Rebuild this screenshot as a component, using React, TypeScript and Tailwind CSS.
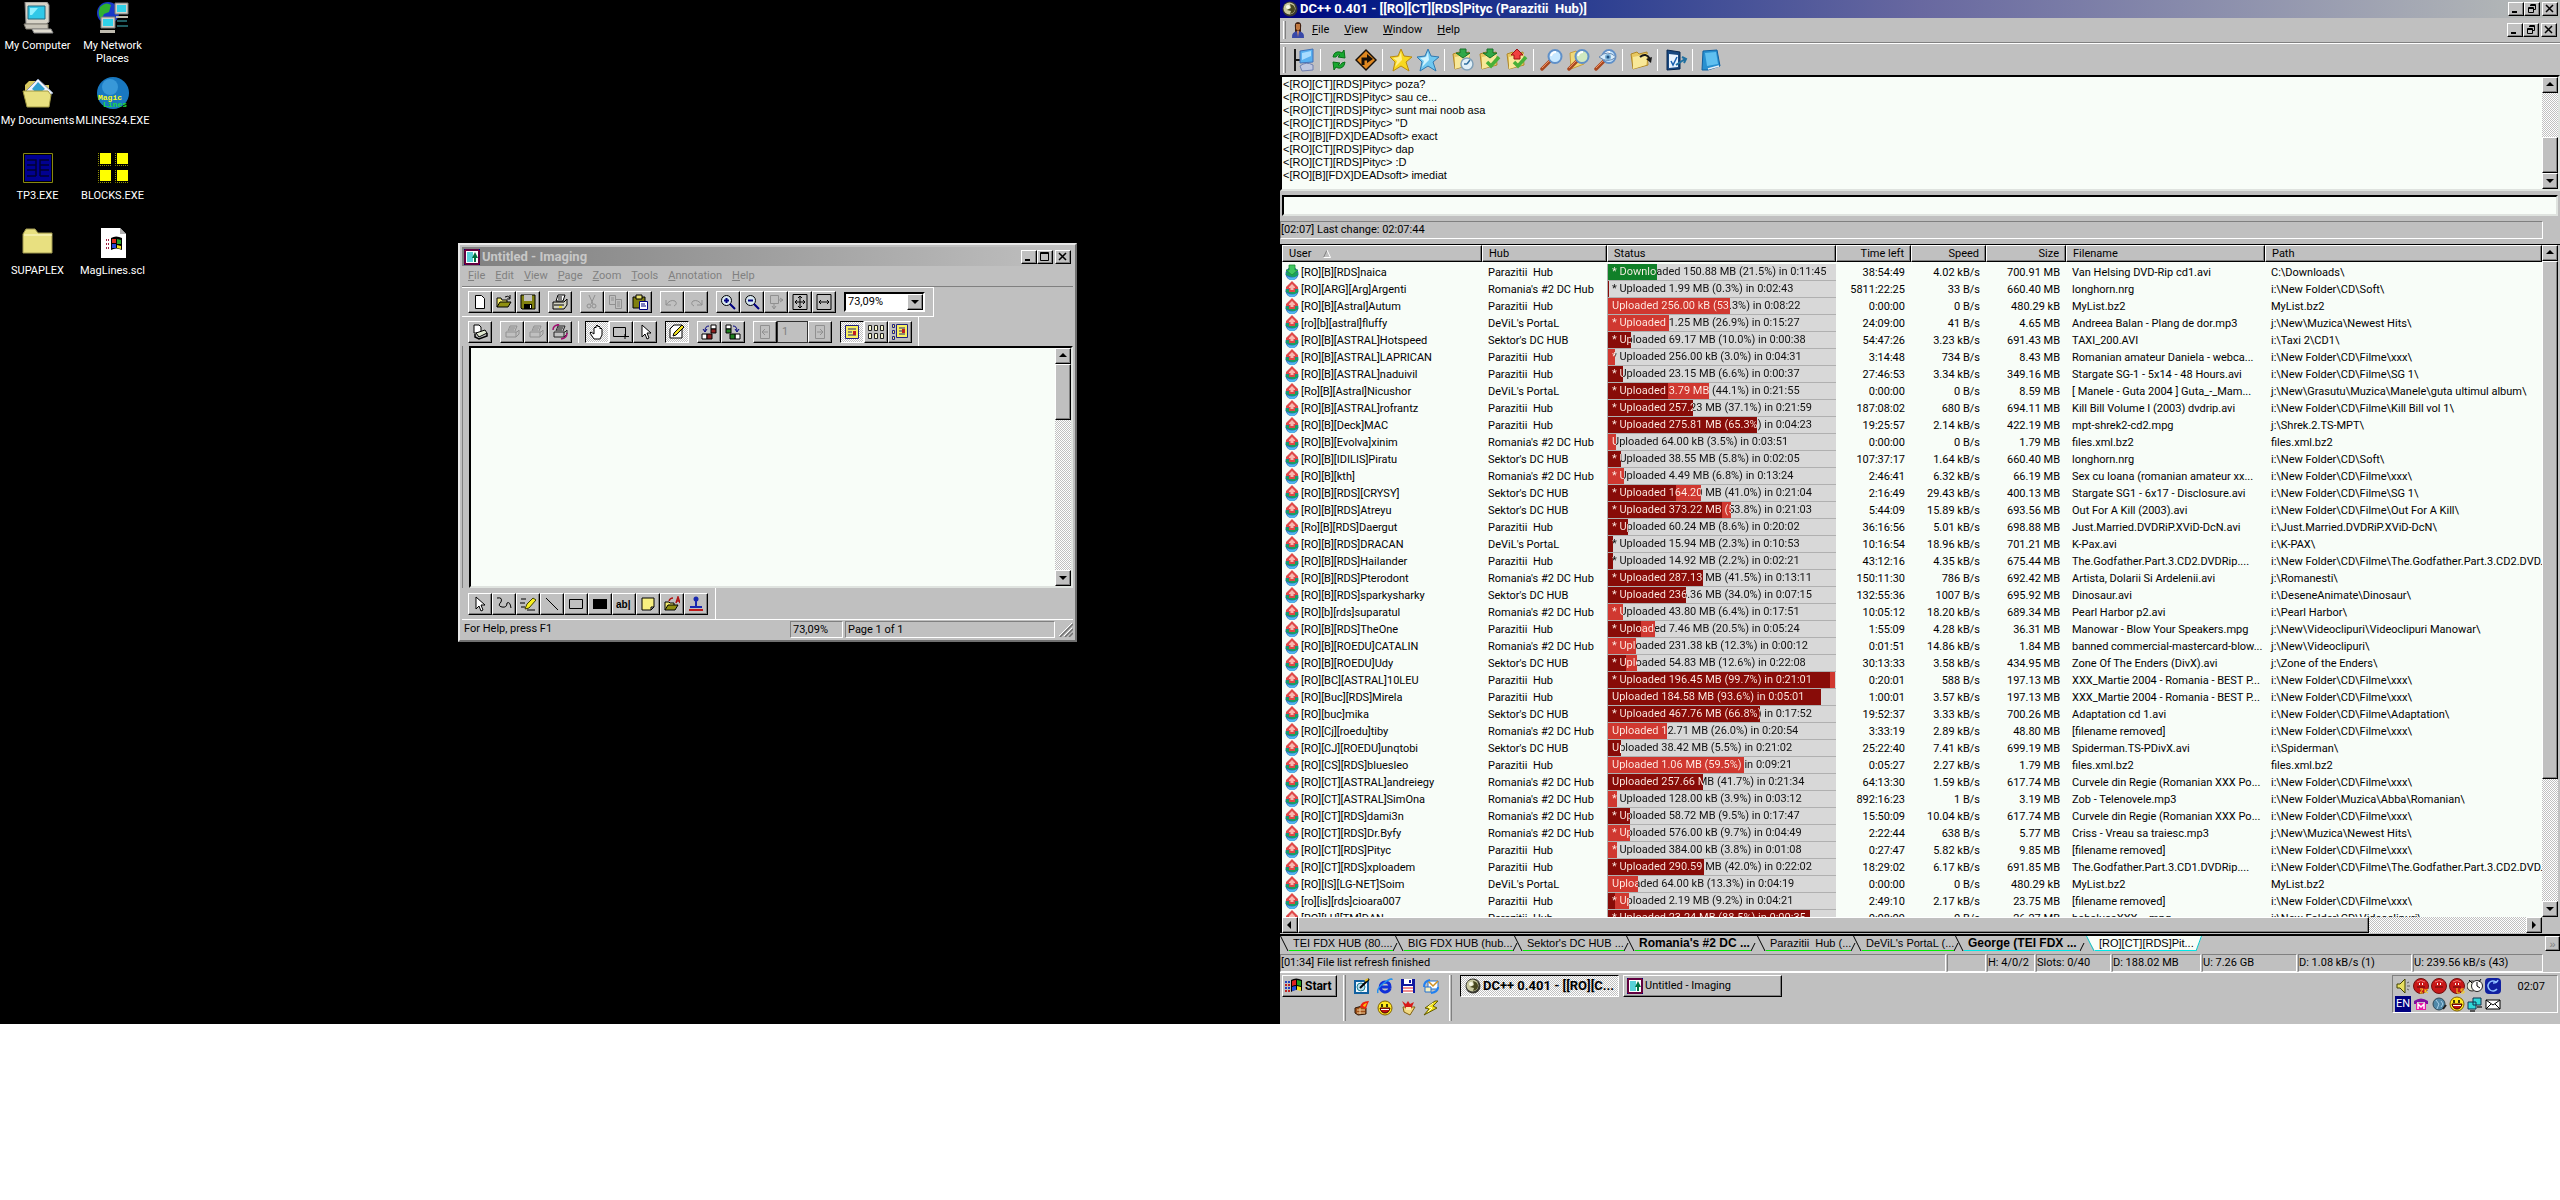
import type { ReactNode } from "react";
import clsx from "clsx";

const raised =
  "border border-t-white border-l-white border-b-black border-r-black shadow-[inset_-1px_-1px_0_#808080]";
const sunken = "border border-t-[#808080] border-l-[#808080] border-b-white border-r-white";
const well =
  "border-2 border-t-black border-l-black border-b-[#dfe3df] border-r-[#dfe3df] bg-[#f8fdf8]";
const dither =
  "bg-[repeating-conic-gradient(#c0c0c0_0_25%,#ffffff_0_50%)] bg-[length:2px_2px]";

/* ---------- icons ---------- */

function Ico({
  children,
  className = "size-4",
  box = 16,
}: {
  children: ReactNode;
  className?: string;
  box?: number;
}) {
  return (
    <svg viewBox={`0 0 ${box} ${box}`} className={clsx("shrink-0", className)} fill="none" aria-hidden="true">
      {children}
    </svg>
  );
}

function Folder() {
  return (
    <>
      <path d="M2 6l6-2 2 2 8-2 1 13-15 4z" fill="#e8c860" stroke="#b08828" />
      <path d="M4 9l15-3-2 11-13 4z" fill="#f8e898" />
    </>
  );
}

function Magnifier({ eye = false, folder = false }: { eye?: boolean; folder?: boolean }) {
  return (
    <Ico box={24} className="size-6">
      {folder && <path d="M3 5l6-2 2 2 6-1v12L4 21z" fill="#f0d878" stroke="#c8a040" />}
      <path d="M2 21l8-8" stroke="#a84820" strokeWidth="3.5" strokeLinecap="round" />
      <path d="M2 20l7-7" stroke="#f09060" strokeWidth="1" />
      <circle cx="15" cy="8.500" r="6.500" fill={folder ? "#d0e8c0" : "#c8e8ff"} stroke="#6090c8" strokeWidth="2" />
      <path d="M11 8q1-4 5-4" stroke="#fff" strokeWidth="2" />
      {eye && (
        <>
          <path d="M5 9q9-8 17 0-8 7-17 0z" fill="#d8ecfa" stroke="#6888b0" />
          <circle cx="14" cy="9" r="3" fill="#78b0d8" />
          <circle cx="14" cy="9" r="1.500" fill="#205080" />
        </>
      )}
    </Ico>
  );
}

const star = "M12 1l3 7 8 1-6 5 3 9-8-5-8 5 2-9-5-5 8-1z";

function FolderAction({ up = false, check = false }: { up?: boolean; check?: boolean }) {
  return (
    <Ico box={24} className="size-6">
      <Folder />
      {up ? (
        <path d="M12 1l6 6h-3v4H9V7H6z" fill="#f04040" stroke="#a01010" />
      ) : (
        <path d="M12 10L5 5h4V1h6v4h4z" fill="#30a848" stroke="#187028" />
      )}
      {check ? (
        <path d="M9 14l4 4 8-9" stroke="#48b038" strokeWidth="3.500" />
      ) : (
        <>
          <circle cx="16" cy="16" r="6" fill="#e0f0f8" stroke="#80a0b8" strokeWidth="1.500" />
          <path d="M16 16l3-4M16 16h-3" stroke="#3070a0" strokeWidth="1.500" />
        </>
      )}
    </Ico>
  );
}

const hubToolbar: { label: string; icon: ReactNode }[][] = [
  [
    {
      label: "Public Hubs",
      icon: (
        <Ico box={24} className="size-6">
          <path d="M3 1v22M3 12h6" stroke="#181818" strokeWidth="2" />
          <path d="M8 3l13-2v13l-13 1z" fill="#58b0f0" stroke="#4070b8" />
          <path d="M10 5l9-2v5l-9 4z" fill="#a8dcff" />
          <path d="M8 18q6-5 13-1v5l-11 1z" fill="#c0c8e0" stroke="#7080b0" />
        </Ico>
      ),
    },
  ],
  [
    {
      label: "Reconnect",
      icon: (
        <Ico box={24} className="size-6">
          <path d="M6 9q1-6 7-5l2 1 2-3 1 8-7-1 2-2q-3-1-4 2z" fill="#18a830" stroke="#087018" />
          <path d="M18 14q-1 7-7 6l-2-1-2 3-1-8 7 1-2 2q3 1 4-2z" fill="#18a830" stroke="#087018" />
        </Ico>
      ),
    },
    {
      label: "Follow redirect",
      icon: (
        <Ico box={24} className="size-6">
          <path d="M12 1l11 11-11 11L1 12z" fill="#181008" />
          <path d="M12 3l9 9-9 9-9-9z" fill="#e08820" />
          <path d="M9 17v-6h5" stroke="#181008" strokeWidth="3" />
          <path d="M13 6l6 5-6 4z" fill="#181008" />
        </Ico>
      ),
    },
  ],
  [
    {
      label: "Favorite Hubs",
      icon: (
        <Ico box={24} className="size-6">
          <path d={star} fill="#f8d820" stroke="#b88810" />
          <path d="M12 4l1 8-7 7 2-6-4-3 6-1z" fill="#fff090" />
        </Ico>
      ),
    },
    {
      label: "Favorite Users",
      icon: (
        <Ico box={24} className="size-6">
          <path d={star} fill="#70c8f0" stroke="#3078b0" />
          <path d="M12 4l1 8-7 7 2-6-4-3 6-1z" fill="#d0f4ff" />
        </Ico>
      ),
    },
  ],
  [
    { label: "Download Queue", icon: <FolderAction /> },
    { label: "Finished Downloads", icon: <FolderAction check /> },
    { label: "Finished Uploads", icon: <FolderAction up check /> },
  ],
  [
    { label: "Search", icon: <Magnifier /> },
    { label: "ADL Search", icon: <Magnifier folder /> },
    { label: "Search Spy", icon: <Magnifier eye /> },
  ],
  [
    {
      label: "Open file list",
      icon: (
        <Ico box={24} className="size-6">
          <Folder />
          <path d="M11 9q6-5 10 2" stroke="#181818" strokeWidth="2" />
          <path d="M17 11l6-2-1 6z" fill="#181818" />
        </Ico>
      ),
    },
  ],
  [
    {
      label: "Settings",
      icon: (
        <Ico box={24} className="size-6">
          <path d="M3 2l13 2v17L3 22z" fill="#184880" stroke="#082850" />
          <path d="M5 6l9 1v12l-9 1z" fill="#e8f4ff" />
          <path d="M7 13l2 4 4-8" stroke="#1860b0" strokeWidth="1.500" />
          <path d="M12 17l9-6M18 9l4 2-2 4" stroke="#2070a0" strokeWidth="2" />
        </Ico>
      ),
    },
  ],
  [
    {
      label: "Notepad",
      icon: (
        <Ico box={24} className="size-6">
          <path d="M4 3l14-1 3 16-12 4H3z" fill="#2890d0" stroke="#1060a0" />
          <path d="M6 5l11-1 2 12-11 2z" fill="#60c0f0" />
          <path d="M9 21l11-3" stroke="#e8f0f8" strokeWidth="1.500" />
        </Ico>
      ),
    },
  ],
];

function UserDrop({ down = false }: { down?: boolean }) {
  return (
    <svg viewBox="0 0 14 17" className="h-[17px] w-3.5 shrink-0" aria-hidden="true">
      <path d="M7 2q7 3 6.500 8.500Q12 16 7 16T.5 10.500Q0 5 7 2z" fill="#2868b8" />
      <path d="M1 8q6 2 12 0v3q-3 3-6 2t-6-2z" fill="#18a060" />
      <path d="M2 12q5 3 10 0-1 4-5 4t-5-4z" fill="#50b8f0" />
      {down ? (
        <path d="M7 11L1 6h3V1h6v5h3z" fill="#40c860" stroke="#189030" strokeWidth=".8" />
      ) : (
        <>
          <path d="M7 0l6 6v2h-3v3H4V8H1V6z" fill="#e04848" />
          <path d="M7 3l3 3v1H8.500v2h-3V7H4V6z" fill="#f8b8b0" />
        </>
      )}
    </svg>
  );
}

function DcLogo() {
  return (
    <Ico className="size-4">
      <circle cx="8" cy="8" r="7.500" fill="#383830" />
      <circle cx="7.500" cy="7.500" r="6" fill="#c8c8a0" />
      <path d="M8 3q5 1 5 5t-5 5l1-3-4-1 4-2z" fill="#484820" />
      <circle cx="6" cy="6" r="2" fill="#f8f8e8" />
    </Ico>
  );
}

function ImagingLogo() {
  return (
    <Ico className="size-4">
      <path d="M0 0h16v16H0z" fill="#000080" />
      <path d="M1 1h14v14H1z" stroke="#c00000" />
      <path d="M2 2h12v12H2z" fill="#fff" />
      <path d="M3 3h6v10H3z" fill="#58d0d8" />
      <path d="M11 3l3 6h-2v4h-2V9H8z" fill="#007040" />
    </Ico>
  );
}

function WinFlag() {
  return (
    <svg viewBox="0 0 18 16" className="h-4 w-[18px] shrink-0" aria-hidden="true">
      <path d="M6 2q5-3 11 0v11q-6-3-11 1z" fill="#000" />
      <path d="M7 3q2-1 4-1v5q-2 0-4 1z" fill="#e02020" />
      <path d="M12 2l4 1v5l-4-1z" fill="#20a020" />
      <path d="M7 9q2-1 4-1v4l-4 1z" fill="#2050e0" />
      <path d="M12 8l4 1v4l-4-1z" fill="#f0e020" />
      <path d="M0 4h2M3 4h2M0 10h2M3 10h2" stroke="#2040c0" strokeWidth="2" />
      <path d="M0 7h2M3 7h2M0 13h2M3 13h2" stroke="#c02020" strokeWidth="2" />
    </svg>
  );
}

const smiley = (
  <Ico>
    <circle cx="8" cy="8" r="7" fill="#ffe820" stroke="#806000" />
    <path d="M3 8h10q-1 5-5 5T3 8z" fill="#c01010" stroke="#400000" />
    <path d="M4 9h8v1H4z" fill="#fff" />
    <path d="M5 4v3M10 4v3" stroke="#000" strokeWidth="1.500" />
  </Ico>
);

const redFace = (
  <>
    <circle cx="8" cy="8" r="7.500" fill="#c81818" stroke="#701010" />
    <path d="M4 4q4-3 8 0" stroke="#f07070" />
    <path d="M6 5h1v2H6zM9 5h1v2H9z" fill="#fff" />
    <path d="M4 9h8" stroke="#600808" />
  </>
);

const quickLaunch: { label: string; icon: ReactNode }[] = [
  {
    label: "Show Desktop",
    icon: (
      <Ico>
        <path d="M1 3h13v12H1z" fill="#f0f8ff" stroke="#1060a0" strokeWidth="2" />
        <circle cx="7" cy="9" r="4" fill="#b8e0f0" stroke="#208090" />
        <path d="M6 10l9-9" stroke="#000" strokeWidth="2" />
        <path d="M11 3l3-2" stroke="#e8c020" strokeWidth="2" />
      </Ico>
    ),
  },
  {
    label: "Internet Explorer",
    icon: (
      <Ico>
        <path d="M13 10.500A5 5 0 118 4q5 0 5 5H4" stroke="#1030d8" strokeWidth="3" />
        <path d="M1 15Q-1 11 7 5t8-3" stroke="#2090f0" strokeWidth="1.500" />
      </Ico>
    ),
  },
  {
    label: "Save",
    icon: (
      <Ico>
        <path d="M1 1h14v14H1z" fill="#1018a0" />
        <path d="M4 1h8v5H4z" fill="#fff" />
        <path d="M9 2h2v3H9z" fill="#1018a0" />
        <path d="M3 8h10v7H3z" fill="#fff" />
        <path d="M3 10h10M3 13h10" stroke="#e02020" />
      </Ico>
    ),
  },
  {
    label: "Outlook Express",
    icon: (
      <Ico>
        <path d="M5 3h10v8H5z" fill="#fff" stroke="#2070d0" />
        <path d="M5 3l5 5 5-5" stroke="#d09020" strokeWidth="1.500" />
        <path d="M1 9q0-6 6-7M15 9q0 5-7 6" stroke="#2080f0" strokeWidth="2" />
        <path d="M2 9h6v5H2z" fill="#f8f0c0" stroke="#2070d0" />
      </Ico>
    ),
  },
  {
    label: "Firewall",
    icon: (
      <Ico>
        <path d="M1 8l7-2 4 2v6l-8 1-3-2z" fill="#a05018" stroke="#301808" />
        <path d="M3 10h8M3 13h8M6 8v6" stroke="#f0d0a0" />
        <path d="M6 7q1-6 9-6-2 4-3 8z" fill="#f02010" />
        <path d="M9 6q0-2 4-3l-2 4z" fill="#f8c010" />
      </Ico>
    ),
  },
  { label: "Messenger", icon: smiley },
  {
    label: "Mail",
    icon: (
      <Ico>
        <path d="M3 7h12l-5 8-6-3z" fill="#f0d880" stroke="#806010" />
        <path d="M2 1l4 3 2-3 2 3 4-2-3 7H6z" fill="#d81818" />
        <path d="M6 7h5v3H6z" fill="#f8e8b0" />
      </Ico>
    ),
  },
  {
    label: "Winamp",
    icon: (
      <Ico>
        <path d="M12 1L2 8l4 1-5 6 13-7-4-2 5-5z" fill="#f0e018" stroke="#605800" />
        <path d="M10 3L5 7l4 1-4 4" stroke="#fffcc0" />
      </Ico>
    ),
  },
];

const trayIcons: { label: string; icon: ReactNode }[] = [
  {
    label: "Volume",
    icon: (
      <Ico>
        <path d="M2 6h3l5-5v14l-5-5H2z" fill="#e8e060" stroke="#404000" />
        <path d="M12 5l2-1M12 8h3M12 11l2 1" stroke="#606060" />
      </Ico>
    ),
  },
  {
    label: "Server 2K",
    icon: (
      <Ico>
        {redFace}
        <path d="M7 11h3l-3 4h3M12 11v4M15 11l-3 2 3 2" stroke="#f8d020" />
      </Ico>
    ),
  },
  { label: "Server", icon: <Ico>{redFace}</Ico> },
  {
    label: "Server LS",
    icon: (
      <Ico>
        {redFace}
        <path d="M8 10v5h3M15 11h-3v2h3v2h-3" stroke="#f8d020" />
      </Ico>
    ),
  },
  {
    label: "Scheduler",
    icon: (
      <Ico>
        <circle cx="5" cy="8" r="5" fill="#f0f0e0" stroke="#202020" />
        <circle cx="10" cy="8" r="5.500" fill="#fff" stroke="#202020" />
        <path d="M10 4v4l3 2M2 2l3 3M14 1l-2 3" stroke="#000" />
      </Ico>
    ),
  },
  {
    label: "Internet",
    icon: (
      <Ico>
        <rect width="16" height="16" rx="4" fill="#1020a0" />
        <path d="M11 4a5 5 0 101 7M8 5q4 0 5-3" stroke="#90c0ff" strokeWidth="1.500" />
      </Ico>
    ),
  },
  {
    label: "Dialer",
    icon: (
      <Ico>
        <path d="M1 5q7-5 14 0v3h-3V6H4v2H1z" fill="#8010a0" />
        <path d="M3 7h10v7H3z" fill="#e818a8" />
        <path d="M5 13V8l3 3 3-3v5" stroke="#fff" strokeWidth="1.500" />
      </Ico>
    ),
  },
  {
    label: "Sound manager",
    icon: (
      <Ico>
        <circle cx="8" cy="8" r="6" fill="#5088a8" stroke="#304858" />
        <path d="M5 4l3 4-2 5M10 5l2 3-2 3" stroke="#a8d0e8" />
        <path d="M12 13l3-4" stroke="#202020" strokeWidth="2" />
      </Ico>
    ),
  },
  { label: "Messenger status", icon: smiley },
  {
    label: "Network",
    icon: (
      <Ico>
        <path d="M6 2h8v7H6zM1 6h8v7H1z" fill="#30d8d8" stroke="#103050" />
        <path d="M3 15h5M10 11h5" stroke="#303030" strokeWidth="1.500" />
      </Ico>
    ),
  },
  {
    label: "New mail",
    icon: (
      <Ico>
        <path d="M1 4h14v9H1z" fill="#fff" stroke="#000" />
        <path d="M1 4l7 5 7-5M1 13l5-5M15 13l-5-5" stroke="#000" />
      </Ico>
    ),
  },
];

/* ---------- window chrome ---------- */

function Caption({ max = false }: { max?: boolean }) {
  const btn = clsx("flex h-3.5 w-4 items-center justify-center bg-[#c0c0c0]", raised);
  return (
    <div className="flex shrink-0">
      <button className={btn} aria-label="Minimize">
        <Ico box={10} className="size-2.5">
          <path d="M1 8h5" stroke="#000" strokeWidth="2" />
        </Ico>
      </button>
      <button className={btn} aria-label={max ? "Maximize" : "Restore"}>
        <Ico box={10} className="size-2.5">
          {max ? (
            <path d="M.5.5h8v8h-8zM0 1.500h9" stroke="#000" />
          ) : (
            <path d="M3.500.5h5v5h-2M3 1.500h6M1.500 3.500h5v5h-5zM1 4.500h6" stroke="#000" />
          )}
        </Ico>
      </button>
      <button className={clsx(btn, "ml-0.5")} aria-label="Close">
        <Ico box={10} className="size-2.5">
          <path d="M1 1l7 7M8 1L1 8" stroke="#000" strokeWidth="1.500" />
        </Ico>
      </button>
    </div>
  );
}

const arrows = {
  up: "M4 1l4 4H0z",
  down: "M0 2h8L4 6z",
  left: "M1 4l4-4v8z",
  right: "M6 4L2 0v8z",
};

function Arrow({ dir, className }: { dir: keyof typeof arrows; className?: string }) {
  return (
    <button
      aria-label={`Scroll ${dir}`}
      className={clsx("flex size-4 shrink-0 items-center justify-center bg-[#c0c0c0]", raised, className)}
    >
      <Ico box={8} className="size-2">
        <path d={arrows[dir]} fill="#000" />
      </Ico>
    </button>
  );
}

function VScroll({ before, thumb }: { before: string; thumb: string }) {
  return (
    <div className={clsx("flex w-4 shrink-0 flex-col", dither)}>
      <Arrow dir="up" />
      <div className={before} />
      <div className={clsx("bg-[#c0c0c0]", raised, thumb)} />
      <Arrow dir="down" className="mt-auto" />
    </div>
  );
}

function Menu({ items, className }: { items: string[]; className: string }) {
  return (
    <nav className={clsx("flex", className)}>
      {items.map((item) => (
        <button key={item}>
          <span className="underline">{item[0]}</span>
          {item.slice(1)}
        </button>
      ))}
    </nav>
  );
}

/* ---------- desktop ---------- */

const desktopIcons: { label: string; icon: ReactNode }[] = [
  {
    label: "My Computer",
    icon: (
      <Ico box={32} className="size-8">
        <path d="M3 0h22l2 3v17l-3 2H4z" fill="#d8d4c8" stroke="#888" />
        <path d="M6 4h17v13H6z" fill="#30c8e8" stroke="#206880" />
        <path d="M8 6h8l-6 7H8z" fill="#90f0ff" />
        <path d="M2 22h24v5H4z" fill="#c8c4b8" stroke="#807c70" />
        <path d="M10 27h19l2 4H12z" fill="#e0dcd0" stroke="#888" />
      </Ico>
    ),
  },
  {
    label: "My Network Places",
    icon: (
      <Ico box={32} className="size-8">
        <circle cx="11" cy="11" r="11" fill="#1838c8" />
        <path d="M3 5q6-6 11-2l-2 7-5 2-3 6q-4-6-1-13z" fill="#30b030" />
        <path d="M18 1h13v11H18z" fill="#d0d0c8" stroke="#777" />
        <path d="M20 3h9v7h-9z" fill="#30d0e8" />
        <path d="M4 15h14v11H4z" fill="#d0d0c8" stroke="#777" />
        <path d="M6 17h10v7H6z" fill="#30d0e8" />
        <path d="M3 28h15v3H3zM19 14h12v2H19z" fill="#c0bcb0" />
        <path d="M20 19h10M20 24h11" stroke="#40b8c0" />
      </Ico>
    ),
  },
  {
    label: "My Documents",
    icon: (
      <Ico box={32} className="size-8">
        <path d="M3 8l4-4h7l2 4h11v9H3z" fill="#d8c860" />
        <path d="M16 2l15 14-6 4H6l-4-4z" fill="#f0f4ff" stroke="#8898b0" />
        <path d="M16 5l7 7-7 5-6-5z" fill="#30a0d0" />
        <path d="M1 14h25l3 4-2 12H5z" fill="#e8e080" stroke="#a09840" />
      </Ico>
    ),
  },
  {
    label: "MLINES24.EXE",
    icon: (
      <Ico box={32} className="size-8">
        <circle cx="16" cy="16" r="16" fill="#1878c0" />
        <circle cx="13" cy="10" r="8" fill="#3898d8" />
        <text x="1" y="23" fontSize="8" fontFamily="Liberation Mono" fontWeight="700" fill="#f8f820">
          Magic
        </text>
        <text x="6" y="30" fontSize="8" fontFamily="Liberation Mono" fontWeight="700" fill="#20d840">
          Lines
        </text>
      </Ico>
    ),
  },
  {
    label: "TP3.EXE",
    icon: (
      <Ico box={32} className="size-8">
        <path d="M1.500 1.500h29v29h-29z" stroke="#888810" />
        <path d="M3 3h26v26H3z" fill="#000090" />
        <path d="M5 8h9v16M5 13h9M5 18h9M5 24h9M27 8h-9v16M27 13h-9M27 18h-9M27 24h-9" stroke="#000030" strokeWidth="1.500" />
      </Ico>
    ),
  },
  {
    label: "BLOCKS.EXE",
    icon: (
      <Ico box={32} className="size-8">
        <path d="M3 1h11v11H3zM20 1h11v11H20zM3 18h11v11H3zM20 18h11v11H20z" fill="#ffff00" />
        <path d="M1.500 1v12.500H14M18.500 1v12.500H31M1.500 18v12.500H14M18.500 18v12.500H31" stroke="#909000" strokeDasharray="1 1" />
      </Ico>
    ),
  },
  {
    label: "SUPAPLEX",
    icon: (
      <Ico box={32} className="size-8">
        <path d="M1 7l3-5h9l3 4h14v20H1z" fill="#e8e080" stroke="#a09850" />
        <path d="M2 8h28" stroke="#fffcd0" />
      </Ico>
    ),
  },
  {
    label: "MagLines.scl",
    icon: (
      <Ico box={32} className="size-8">
        <path d="M4 1h19l6 6v24H4z" fill="#fff" />
        <path d="M23 1v6h6z" fill="#b0b0b0" />
        <path d="M14 11q5-3 11 0v12q-6-3-11 0z" fill="#000" />
        <path d="M15 12h4v4h-4z" fill="#e03020" />
        <path d="M20 12l4 1v4h-4z" fill="#28a028" />
        <path d="M15 17h4v4h-4z" fill="#2848d8" />
        <path d="M20 18l4 1v3l-4-1z" fill="#f0e020" />
        <path d="M9 13h4M9 17h4M9 21h4" stroke="#a02040" strokeWidth="2" strokeDasharray="1 1" />
      </Ico>
    ),
  },
];

/* ---------- Imaging window ---------- */

type Tool = { label: string; icon: ReactNode; down?: boolean };

const gray = "#909090";
const page = "M3.500 1.500h6l3 3v10h-9z";
const pageStack = (color: string) => (
  <>
    <path d="M4 7l2-5h7l-2 5M2 8h11l2-2M2 8v5h10V8M12 13l3-3V6" stroke={color} />
    <path d="M6 4h5M5 6h5" stroke={color} />
  </>
);

const fileTools: Tool[][] = [
  [
    { label: "New", icon: <path d={page} fill="#fff" stroke="#000" /> },
    {
      label: "Open",
      icon: (
        <>
          <path d="M1 13V4h4l1 2h5v2" fill="#f0e870" stroke="#000" />
          <path d="M1 13l3-5h11l-3 5z" fill="#909010" stroke="#000" />
          <path d="M9 3q3-2 5 1M14 1v4h-3" stroke="#000" />
        </>
      ),
    },
    {
      label: "Save",
      icon: (
        <>
          <path d="M1 1h14v14H2l-1-1z" fill="#808010" stroke="#000" />
          <path d="M4 1h8v6H4z" fill="#c0c0c0" />
          <path d="M4 10h8v5H4z" fill="#000" />
          <path d="M10 11h1v3h-1z" fill="#fff" />
        </>
      ),
    },
  ],
  [
    {
      label: "Print",
      icon: (
        <>
          <path d="M4 7l2-6h7l-2 6z" fill="#fff" stroke="#000" />
          <path d="M1 8h11l3-3v6l-3 4H1z" fill="#d0d0c0" stroke="#000" />
          <path d="M2 11h10M6 3h4M6 5h4" stroke="#000" />
          <path d="M7 13h3" stroke="#f0e000" strokeWidth="1.500" />
        </>
      ),
    },
  ],
  [
    {
      label: "Cut",
      icon: (
        <>
          <path d="M5 1l4 9M11 1L7 10" stroke={gray} />
          <circle cx="5" cy="12" r="2" stroke={gray} />
          <circle cx="10" cy="12" r="2" stroke={gray} />
        </>
      ),
    },
    {
      label: "Copy",
      icon: <path d="M1.500 1.500h6v9h-6zM3 4h3M3 6h3M7.500 5.500h6v9h-6zM9 8h3M9 10h3M9 12h3" stroke={gray} />,
    },
    {
      label: "Paste",
      icon: (
        <>
          <path d="M1 3h12v11H1z" fill="#808010" stroke="#000" />
          <path d="M4 1h6v4H4z" fill="#e8e070" stroke="#000" />
          <path d="M7.500 7.500h8v8h-8z" fill="#fff" stroke="#000080" />
          <path d="M9 10h4M9 12h5" stroke="#000080" />
        </>
      ),
    },
  ],
  [
    { label: "Undo", icon: <path d="M2 6v5h5M2 11q4-6 9-4 3 3-1 5" stroke={gray} /> },
    { label: "Redo", icon: <path d="M14 6v5H9M14 11q-4-6-9-4-3 3 1 5" stroke={gray} /> },
  ],
  [
    {
      label: "Zoom in",
      icon: (
        <>
          <circle cx="6.500" cy="6.500" r="5" fill="#d8e8f0" stroke="#000" />
          <path d="M4 6.500h5M6.500 4v5M10 10l5 5" stroke="#000080" strokeWidth="2" />
        </>
      ),
    },
    {
      label: "Zoom out",
      icon: (
        <>
          <circle cx="6.500" cy="6.500" r="5" fill="#d8e8f0" stroke="#000" />
          <path d="M4 6.500h5M10 10l5 5" stroke="#000080" strokeWidth="2" />
        </>
      ),
    },
    { label: "Zoom to selection", icon: <path d="M2.500 1.500h8v8h-8zM6 9v5M4 12l2 3 2-3M10 6h5M12 4l3 2-3 2" stroke={gray} /> },
    {
      label: "Best fit",
      icon: <path d="M1 .5h14v15H1zM8 2v12M3 8h10M6 4l2-2 2 2M6 12l2 2 2-2M5 6L3 8l2 2M11 6l2 2-2 2" stroke="#000" />,
    },
    { label: "Fit to width", icon: <path d="M1 .5h14v15H1zM3 8h10M5 6L3 8l2 2M11 6l2 2-2 2" stroke="#000" /> },
  ],
];

const scanTools: Tool[][] = [
  [
    {
      label: "Scan new",
      icon: (
        <>
          <path d="M2 1h5l2 2v6H2z" fill="#fff" stroke="#000" />
          <path d="M4 9l9-3 2 3-8 4z" fill="#e0e8d0" stroke="#000" />
          <path d="M3 10v3l4 2 8-3V9" stroke="#000" strokeWidth="1.500" />
        </>
      ),
    },
  ],
  [
    { label: "Insert scan", icon: pageStack(gray) },
    { label: "Append scan", icon: pageStack(gray) },
    {
      label: "Rescan",
      icon: (
        <>
          {pageStack("#202020")}
          <path d="M1 6q0-5 6-5l-2-1M15 9q0 5-6 6" stroke="#a01070" strokeWidth="1.500" />
        </>
      ),
    },
  ],
];

const viewTools: Tool[][] = [
  [
    {
      label: "Drag",
      down: true,
      icon: (
        <path
          d="M5 15l-4-6 1-1 3 2V4l1-1 1 1V2l1-1 1 1v1l1-1 1 1v2l1-1 1 1v6l-2 4z"
          fill="#fff"
          stroke="#000"
        />
      ),
    },
    { label: "Select image", icon: <path d="M.5 3.500h12v9H.5zM12 10v5M10 12.500h6" stroke="#000" /> },
    { label: "Select annotation", icon: <path d="M5 1v12l3-3 2 5 2-1-2-5h4z" fill="#fff" stroke="#000" /> },
  ],
  [
    {
      label: "Annotation toolbox",
      down: true,
      icon: (
        <>
          <path d="M1 5l4-4h8v13H1z" fill="#fff" stroke="#000" />
          <path d="M4 12l1-3 8-8 2 2-8 8z" fill="#f0e020" stroke="#000" />
        </>
      ),
    },
  ],
  [
    {
      label: "Rotate left",
      icon: (
        <>
          <path d="M10 1h5v4h-5zM1 10h5v5H1z" fill="#fff" stroke="#000" />
          <path d="M10 5h5v4h-5zM6 10h5v5H6z" fill="#902020" stroke="#000" />
          <path d="M8 2Q4 2 4 7M2 5l2 3 2-3" stroke="#000080" />
        </>
      ),
    },
    {
      label: "Rotate right",
      icon: (
        <>
          <path d="M1 1h5v4H1zM10 10h5v5h-5z" fill="#fff" stroke="#000" />
          <path d="M1 5h5v4H1zM5 10h5v5H5z" fill="#208020" stroke="#000" />
          <path d="M8 2q4 0 4 5M10 5l2 3 2-3" stroke="#000080" />
        </>
      ),
    },
  ],
];

const layoutTools: Tool[] = [
  {
    label: "One page view",
    down: true,
    icon: (
      <>
        <path d="M1.500 1.500h13v13h-13z" fill="#f8f060" stroke="#202080" />
        <path d="M4 5h8M4 8h4M4 11h8" stroke="#202080" />
        <path d="M9 7h3v4H9z" fill="#c02020" />
      </>
    ),
  },
  {
    label: "Thumbnail view",
    icon: <path d="M.5 1.500h3v5h-3zM6.500 1.500h3v5h-3zM12.500 1.500h3v5h-3zM.5 9.500h3v5h-3zM6.500 9.500h3v5h-3zM12.500 9.500h3v5h-3z" fill="#f8f8d0" stroke="#202020" />,
  },
  {
    label: "Page and thumbnails view",
    icon: (
      <>
        <path d="M.5.5h2v3h-2zM.5 6.500h2v3h-2zM.5 12.500h2v3h-2zM4.500.5h11v13h-11z" fill="#f8f060" stroke="#202080" />
        <path d="M7 4h6M7 7h3M7 10h6" stroke="#202080" />
        <path d="M10 5h3v4h-3z" fill="#c02020" />
      </>
    ),
  },
];

const annotationTools: Tool[] = [
  { label: "Annotation selection", icon: <path d="M4 1v12l3-3 2 5 2-1-2-5h4z" fill="#fff" stroke="#000" /> },
  { label: "Freehand line", icon: <path d="M1 2q6-1 4 4-4 4 1 5t5-4q3-2 4 5" stroke="#000" /> },
  {
    label: "Highlighter",
    icon: (
      <>
        <path d="M1 3h5M0 7h5M1 11h4M7 14h8" stroke="#000" />
        <path d="M5 13l2-5 6-6 3 2-7 8z" fill="#f8f020" stroke="#404000" />
      </>
    ),
  },
  { label: "Straight line", icon: <path d="M2 2l12 12" stroke="#000" /> },
  { label: "Hollow rectangle", icon: <path d="M1.500 3.500h13v9h-13z" stroke="#000" /> },
  { label: "Filled rectangle", icon: <path d="M1 3h14v10H1z" fill="#000" /> },
  {
    label: "Typed text",
    icon: (
      <text x="0" y="12" fontSize="10" fontFamily="Liberation Sans" fontWeight="700" fill="#000">
        ab|
      </text>
    ),
  },
  { label: "Attach a note", icon: <path d="M2 2h12v9l-3 3H2zM14 11h-3v3" fill="#f8f080" stroke="#000" /> },
  {
    label: "Text from file",
    icon: (
      <>
        <path d="M1 14V6h4l1 1h4v2" fill="#f0e870" stroke="#000" />
        <path d="M1 14l3-5h10l-3 5z" fill="#909010" stroke="#000" />
        <path d="M12 7l2-6 2 6M13 5h2M5 5q1-3 4-3" stroke="#b01010" strokeWidth="1.500" />
      </>
    ),
  },
  {
    label: "Rubber stamp",
    icon: (
      <>
        <circle cx="8" cy="3" r="2.500" fill="#1828b0" />
        <path d="M7 4h2v6H7z" fill="#1828b0" />
        <path d="M2 10h12v2H2z" fill="#1828b0" />
        <path d="M1 13h14v2H1z" fill="#c01818" />
      </>
    ),
  },
];

function ToolButton({ label, icon, down }: Tool) {
  return (
    <button
      aria-label={label}
      className={clsx(
        "flex h-[22px] w-6 items-center justify-center",
        down
          ? clsx("border border-t-black border-l-black border-r-white border-b-white", dither)
          : clsx("bg-[#c0c0c0]", raised),
      )}
    >
      <Ico>{icon}</Ico>
    </button>
  );
}

function ToolGroup({ tools }: { tools: Tool[] }) {
  return (
    <div className="flex">
      {tools.map((t) => (
        <ToolButton key={t.label} {...t} />
      ))}
    </div>
  );
}

function ImagingWindow() {
  return (
    <section
      className={clsx(
        "absolute top-[243px] left-[458px] flex h-[399px] w-[619px] flex-col border-2 bg-[#c0c0c0] p-0.5",
        "border-t-[#e8e8e8] border-l-[#e8e8e8] border-r-[#707070] border-b-[#707070]",
      )}
    >
      <header className="flex h-[19px] shrink-0 items-center gap-0.5 bg-linear-to-r from-[#808080] to-[#c0c0c0] px-0.5">
        <ImagingLogo />
        <h2 className="grow text-[13px] leading-4 font-bold text-[#c8c8c8]">Untitled - Imaging</h2>
        <Caption max />
      </header>
      <Menu
        items={["File", "Edit", "View", "Page", "Zoom", "Tools", "Annotation", "Help"]}
        className="h-[21px] shrink-0 items-center gap-2.5 border-b border-b-[#808080] px-1.5 text-[#808080]"
      />
      <div className="flex h-[30px] w-[472px] shrink-0 items-center gap-2 border-t border-r border-b border-white pl-1.5">
        {fileTools.map((tools) => (
          <ToolGroup key={tools[0].label} tools={tools} />
        ))}
        <div className={clsx("flex h-5 w-[81px] bg-white", "border-2 border-t-black border-l-black border-r-white border-b-white")}>
          <input aria-label="Zoom" defaultValue="73,09%" className="w-0 grow bg-transparent pl-0.5 outline-none" />
          <Arrow dir="down" />
        </div>
      </div>
      <div className="flex h-[29px] w-[457px] shrink-0 items-center border-r border-white pl-1.5">
        <div className="flex gap-2 border-r border-white pr-1.5">
          {scanTools.map((tools) => (
            <ToolGroup key={tools[0].label} tools={tools} />
          ))}
        </div>
        <div className="flex gap-2 pl-1.5">
          {viewTools.map((tools) => (
            <ToolGroup key={tools[0].label} tools={tools} />
          ))}
          <div className="flex">
            <ToolButton
              label="Previous page"
              icon={<path d="M3.500 1.500h9v13h-9zM11 8H6M8 5L5 8l3 3" stroke={gray} />}
            />
            <input
              aria-label="Page number"
              defaultValue="1"
              className={clsx("h-[22px] w-[31px] bg-[#c0c0c0] px-1 text-[#808080] outline-none", "border border-[#303030]")}
            />
            <ToolButton
              label="Next page"
              icon={<path d="M3.500 1.500h9v13h-9zM5 8h5M8 5l3 3-3 3" stroke={gray} />}
            />
          </div>
          <ToolGroup tools={layoutTools} />
        </div>
      </div>
      <div className="flex min-h-0 grow border-l border-[#808080] pl-1.5">
        <div className={clsx("flex grow", well)}>
          <div className="grow" />
          <VScroll before="" thumb="h-14" />
        </div>
      </div>
      <div className="flex h-[31px] w-[254px] shrink-0 items-center border-r border-white pl-1.5">
        <ToolGroup tools={annotationTools} />
      </div>
      <footer className="flex h-[19px] shrink-0 gap-0.5 border-t border-white pt-px leading-4">
        <div className="w-[326px] pl-0.5">For Help, press F1</div>
        <div className={clsx("w-[53px] pl-0.5", sunken)}>73,09%</div>
        <div className={clsx("grow pl-0.5", sunken)}>Page 1 of 1</div>
        <Ico className="size-4">
          <path d="M3 16L16 3M8 16l8-8M12 16l4-4" stroke="#707070" strokeWidth="1.500" />
          <path d="M2 15L15 2M7 15l8-8" stroke="#fff" />
        </Ico>
      </footer>
    </section>
  );
}

/* ---------- DC++ ---------- */

const chat: [string, string][] = [
  ["[RO][CT][RDS]Pityc", "poza?"],
  ["[RO][CT][RDS]Pityc", "sau ce..."],
  ["[RO][CT][RDS]Pityc", "sunt mai noob asa"],
  ["[RO][CT][RDS]Pityc", "''D"],
  ["[RO][B][FDX]DEADsoft", "exact"],
  ["[RO][CT][RDS]Pityc", "dap"],
  ["[RO][CT][RDS]Pityc", ":D"],
  ["[RO][B][FDX]DEADsoft", "imediat"],
];

const P = "Parazitii  Hub";
const R = "Romania's #2 DC Hub";
const D = "DeViL's PortaL";
const S = "Sektor's DC HUB";
const XXX = "i:\\New Folder\\CD\\Filme\\xxx\\";
const GODFATHER = "i:\\New Folder\\CD\\Filme\\The.Godfather.Part.3.CD2.DVD.";

// user, hub, status, percent done, percent drawn dark, time left, speed, size, filename, path
type Transfer = [string, string, string, number, number, string, string, string, string, string];

const transfers: Transfer[] = [
  ["[RO][B][RDS]naica", P, "* Downloaded 150.88 MB (21.5%) in 0:11:45", 21.5, 0, "38:54:49", "4.02 kB/s", "700.91 MB", "Van Helsing DVD-Rip cd1.avi", "C:\\Downloads\\"],
  ["[RO][ARG][Arg]Argenti", R, "* Uploaded 1.99 MB (0.3%) in 0:02:43", 0.3, 0.3, "5811:22:25", "33 B/s", "660.40 MB", "longhorn.nrg", "i:\\New Folder\\CD\\Soft\\"],
  ["[RO][B][Astral]Autum", P, "Uploaded 256.00 kB (53.3%) in 0:08:22", 53.3, 0, "0:00:00", "0 B/s", "480.29 kB", "MyList.bz2", "MyList.bz2"],
  ["[ro][b][astral]fluffy", D, "* Uploaded 1.25 MB (26.9%) in 0:15:27", 26.9, 0, "24:09:00", "41 B/s", "4.65 MB", "Andreea Balan - Plang de dor.mp3", "j:\\New\\Muzica\\Newest Hits\\"],
  ["[RO][B][ASTRAL]Hotspeed", S, "* Uploaded 69.17 MB (10.0%) in 0:00:38", 10, 10, "54:47:26", "3.23 kB/s", "691.43 MB", "TAXI_200.AVI", "i:\\Taxi 2\\CD1\\"],
  ["[RO][B][ASTRAL]LAPRICAN", P, "* Uploaded 256.00 kB (3.0%) in 0:04:31", 3, 0, "3:14:48", "734 B/s", "8.43 MB", "Romanian amateur Daniela - webca...", XXX],
  ["[RO][B][ASTRAL]naduivil", P, "* Uploaded 23.15 MB (6.6%) in 0:00:37", 6.6, 6.6, "27:46:53", "3.34 kB/s", "349.16 MB", "Stargate SG-1 - 5x14 - 48 Hours.avi", "i:\\New Folder\\CD\\Filme\\SG 1\\"],
  ["[Ro][B][Astral]Nicushor", D, "* Uploaded 3.79 MB (44.1%) in 0:21:55", 44.1, 26.5, "0:00:00", "0 B/s", "8.59 MB", "[ Manele - Guta 2004 ] Guta_-_Mam...", "j:\\New\\Grasutu\\Muzica\\Manele\\guta ultimul album\\"],
  ["[RO][B][ASTRAL]rofrantz", P, "* Uploaded 257.23 MB (37.1%) in 0:21:59", 37.1, 37.1, "187:08:02", "680 B/s", "694.11 MB", "Kill Bill Volume I (2003) dvdrip.avi", "i:\\New Folder\\CD\\Filme\\Kill Bill vol 1\\"],
  ["[RO][B][Deck]MAC", P, "* Uploaded 275.81 MB (65.3%) in 0:04:23", 65.3, 65.3, "19:25:57", "2.14 kB/s", "422.19 MB", "mpt-shrek2-cd2.mpg", "j:\\Shrek.2.TS-MPT\\"],
  ["[RO][B][Evolva]xinim", R, "Uploaded 64.00 kB (3.5%) in 0:03:51", 3.5, 0, "0:00:00", "0 B/s", "1.79 MB", "files.xml.bz2", "files.xml.bz2"],
  ["[RO][B][IDILIS]Piratu", S, "* Uploaded 38.55 MB (5.8%) in 0:02:05", 5.8, 5.8, "107:37:17", "1.64 kB/s", "660.40 MB", "longhorn.nrg", "i:\\New Folder\\CD\\Soft\\"],
  ["[RO][B][kth]", R, "* Uploaded 4.49 MB (6.8%) in 0:13:24", 6.8, 0, "2:46:41", "6.32 kB/s", "66.19 MB", "Sex cu Ioana (romanian amateur xx...", XXX],
  ["[RO][B][RDS][CRYSY]", S, "* Uploaded 164.20 MB (41.0%) in 0:21:04", 41, 30, "2:16:49", "29.43 kB/s", "400.13 MB", "Stargate SG1 - 6x17 - Disclosure.avi", "i:\\New Folder\\CD\\Filme\\SG 1\\"],
  ["[RO][B][RDS]Atreyu", S, "* Uploaded 373.22 MB (53.8%) in 0:21:03", 53.8, 50, "5:44:09", "15.89 kB/s", "693.56 MB", "Out For A Kill (2003).avi", "i:\\New Folder\\CD\\Filme\\Out For A Kill\\"],
  ["[Ro][B][RDS]Daergut", P, "* Uploaded 60.24 MB (8.6%) in 0:20:02", 8.6, 8.6, "36:16:56", "5.01 kB/s", "698.88 MB", "Just.Married.DVDRiP.XViD-DcN.avi", "i:\\Just.Married.DVDRiP.XViD-DcN\\"],
  ["[RO][B][RDS]DRACAN", D, "* Uploaded 15.94 MB (2.3%) in 0:10:53", 2.3, 2.3, "10:16:54", "18.96 kB/s", "701.21 MB", "K-Pax.avi", "i:\\K-PAX\\"],
  ["[RO][B][RDS]Hailander", P, "* Uploaded 14.92 MB (2.2%) in 0:02:21", 2.2, 2.2, "43:12:16", "4.35 kB/s", "675.44 MB", "The.Godfather.Part.3.CD2.DVDRip....", GODFATHER],
  ["[RO][B][RDS]Pterodont", R, "* Uploaded 287.13 MB (41.5%) in 0:13:11", 41.5, 41.5, "150:11:30", "786 B/s", "692.42 MB", "Artista, Dolarii Si Ardelenii.avi", "j:\\Romanesti\\"],
  ["[RO][B][RDS]sparkysharky", S, "* Uploaded 236.36 MB (34.0%) in 0:07:15", 34, 34, "132:55:36", "1007 B/s", "695.92 MB", "Dinosaur.avi", "i:\\DeseneAnimate\\Dinosaur\\"],
  ["[RO][b][rds]suparatul", R, "* Uploaded 43.80 MB (6.4%) in 0:17:51", 6.4, 0, "10:05:12", "18.20 kB/s", "689.34 MB", "Pearl Harbor p2.avi", "i:\\Pearl Harbor\\"],
  ["[RO][B][RDS]TheOne", P, "* Uploaded 7.46 MB (20.5%) in 0:05:24", 20.5, 14.5, "1:55:09", "4.28 kB/s", "36.31 MB", "Manowar - Blow Your Speakers.mpg", "j:\\New\\Videoclipuri\\Videoclipuri Manowar\\"],
  ["[RO][B][ROEDU]CATALIN", R, "* Uploaded 231.38 kB (12.3%) in 0:00:12", 12.3, 0, "0:01:51", "14.86 kB/s", "1.84 MB", "banned commercial-mastercard-blow...", "j:\\New\\Videoclipuri\\"],
  ["[RO][B][ROEDU]Udy", S, "* Uploaded 54.83 MB (12.6%) in 0:22:08", 12.6, 8, "30:13:33", "3.58 kB/s", "434.95 MB", "Zone Of The Enders (DivX).avi", "j:\\Zone of the Enders\\"],
  ["[RO][BC][ASTRAL]10LEU", P, "* Uploaded 196.45 MB (99.7%) in 0:21:01", 99.7, 97.5, "0:20:01", "588 B/s", "197.13 MB", "XXX_Martie 2004 - Romania - BEST P...", XXX],
  ["[RO][Buc][RDS]Mirela", P, "Uploaded 184.58 MB (93.6%) in 0:05:01", 93.6, 93.6, "1:00:01", "3.57 kB/s", "197.13 MB", "XXX_Martie 2004 - Romania - BEST P...", XXX],
  ["[RO][buc]mika", S, "* Uploaded 467.76 MB (66.8%) in 0:17:52", 66.8, 66.8, "19:52:37", "3.33 kB/s", "700.26 MB", "Adaptation cd 1.avi", "i:\\New Folder\\CD\\Filme\\Adaptation\\"],
  ["[RO][Cj][roedu]tiby", R, "Uploaded 12.71 MB (26.0%) in 0:20:54", 26, 0, "3:33:19", "2.89 kB/s", "48.80 MB", "[filename removed]", XXX],
  ["[RO][CJ][ROEDU]unqtobi", S, "Uploaded 38.42 MB (5.5%) in 0:21:02", 5.5, 5.5, "25:22:40", "7.41 kB/s", "699.19 MB", "Spiderman.TS-PDivX.avi", "i:\\Spiderman\\"],
  ["[RO][CS][RDS]bluesleo", P, "Uploaded 1.06 MB (59.5%) in 0:09:21", 59.5, 0, "0:05:27", "2.27 kB/s", "1.79 MB", "files.xml.bz2", "files.xml.bz2"],
  ["[RO][CT][ASTRAL]andreiegy", R, "Uploaded 257.66 MB (41.7%) in 0:21:34", 41.7, 41.7, "64:13:30", "1.59 kB/s", "617.74 MB", "Curvele din Regie (Romanian XXX Po...", XXX],
  ["[RO][CT][ASTRAL]SimOna", R, "* Uploaded 128.00 kB (3.9%) in 0:03:12", 3.9, 0, "892:16:23", "1 B/s", "3.19 MB", "Zob - Telenovele.mp3", "i:\\New Folder\\Muzica\\Abba\\Romanian\\"],
  ["[RO][CT][RDS]dami3n", R, "* Uploaded 58.72 MB (9.5%) in 0:17:47", 9.5, 9.5, "15:50:09", "10.04 kB/s", "617.74 MB", "Curvele din Regie (Romanian XXX Po...", XXX],
  ["[RO][CT][RDS]Dr.Byfy", R, "* Uploaded 576.00 kB (9.7%) in 0:04:49", 9.7, 0, "2:22:44", "638 B/s", "5.77 MB", "Criss - Vreau sa traiesc.mp3", "j:\\New\\Muzica\\Newest Hits\\"],
  ["[RO][CT][RDS]Pityc", P, "* Uploaded 384.00 kB (3.8%) in 0:01:08", 3.8, 0, "0:27:47", "5.82 kB/s", "9.85 MB", "[filename removed]", XXX],
  ["[RO][CT][RDS]xploadem", P, "* Uploaded 290.59 MB (42.0%) in 0:22:02", 42, 42, "18:29:02", "6.17 kB/s", "691.85 MB", "The.Godfather.Part.3.CD1.DVDRip....", GODFATHER],
  ["[RO][IS][LG-NET]Soim", D, "Uploaded 64.00 kB (13.3%) in 0:04:19", 13.3, 0, "0:00:00", "0 B/s", "480.29 kB", "MyList.bz2", "MyList.bz2"],
  ["[ro][is][rds]cioara007", P, "* Uploaded 2.19 MB (9.2%) in 0:04:21", 9.2, 3, "2:49:10", "2.17 kB/s", "23.75 MB", "[filename removed]", XXX],
  ["[RO][LU][TM]DAN", P, "* Uploaded 23.24 MB (88.5%) in 0:00:35", 88.5, 88.5, "0:08:09", "0 B/s", "26.27 MB", "babalucaXXX....mpg", "i:\\New Folder\\CD\\Videoclipuri\\"],
];

const columns = [
  { label: "User", width: "w-[200px]" },
  { label: "Hub", width: "w-[125px]" },
  { label: "Status", width: "w-[229px]" },
  { label: "Time left", width: "w-[75px]", right: true },
  { label: "Speed", width: "w-[75px]", right: true },
  { label: "Size", width: "w-[80px]", right: true },
  { label: "Filename", width: "w-[199px]" },
  { label: "Path", width: "" },
];

function StatusBar({ text, done, dark }: { text: string; done: number; dark: number }) {
  const light = text.startsWith("* Down") ? "#108028" : "#d03830";
  return (
    <div
      className="h-[17px] border-b border-l border-[#b0b0b0]"
      style={{
        background: `linear-gradient(to right, #880c08 ${dark}%, ${light} ${dark}% ${done}%, #d8d8d8 ${done}%)`,
      }}
    >
      <span
        className="block bg-clip-text pl-1 leading-4 whitespace-pre text-transparent"
        style={{
          backgroundImage: `linear-gradient(to right, #fff0e8 ${done}%, #101010 ${done}%)`,
        }}
      >
        {text}
      </span>
    </div>
  );
}

function TransferTable() {
  return (
    <table className="w-full table-fixed border-collapse text-left">
      <thead>
        <tr>
          {columns.map((c) => (
            <th key={c.label} className={clsx("h-[19px] p-0 align-top font-normal", c.width)}>
              <div className={clsx("h-[17px] bg-[#c0c0c0] px-1.5 leading-4", raised, c.right && "text-right")}>
                {c.label}
                {c.label === "User" && (
                  <svg viewBox="0 0 8 8" className="ml-3 inline size-2" fill="none" aria-hidden="true">
                    <path d="M4 0L.5 7.500" stroke="#808080" />
                    <path d="M4 0l3.500 7.500H.5" stroke="#fff" />
                  </svg>
                )}
              </div>
            </th>
          ))}
        </tr>
      </thead>
      <tbody>
        {transfers.map(([user, hub, status, done, dark, left, speed, size, file, path]) => (
          <tr key={user} className="h-[17px] leading-[17px] whitespace-pre">
            <td className="overflow-hidden p-0">
              <div className="flex h-[17px] gap-0.5 pl-[3px]">
                <UserDrop down={status.startsWith("* Down")} />
                {user}
              </div>
            </td>
            <td className="overflow-hidden px-1.5 py-0">{hub}</td>
            <td className="p-0">
              <StatusBar text={status} done={done} dark={dark} />
            </td>
            <td className="px-1.5 py-0 text-right">{left}</td>
            <td className="px-1.5 py-0 text-right">{speed}</td>
            <td className="px-1.5 py-0 text-right">{size}</td>
            <td className="overflow-hidden py-0 pl-1.5">{file}</td>
            <td className="overflow-hidden py-0 pl-1.5">{path}</td>
          </tr>
        ))}
      </tbody>
    </table>
  );
}

const tabs = [
  { label: "TEI FDX HUB (80....", width: "w-[115px]" },
  { label: "BIG FDX HUB (hub...", width: "w-[119px]" },
  { label: "Sektor's DC HUB ...", width: "w-[112px]" },
  { label: "Romania's #2 DC ...", width: "w-[131px]", bold: true },
  { label: "Parazitii  Hub (...", width: "w-[96px]" },
  { label: "DeViL's PortaL (...", width: "w-[102px]" },
  { label: "George (TEI FDX ...", width: "w-[131px]", bold: true, cyan: true },
  { label: "[RO][CT][RDS]Pit...", width: "w-[116px]", cyan: true, active: true },
];

function HubTabs() {
  return (
    <div className="flex h-[17px] border-t-2 border-black font-['Liberation_Sans',sans-serif]">
      {tabs.map((t) => (
        <button key={t.label} className={clsx("flex h-[15px]", t.width)}>
          <svg viewBox="0 0 9 15" className="h-[15px] w-[9px] shrink-0" aria-hidden="true">
            {t.active && <path d="M0 0h9v15z" fill="#f8fdf8" />}
            <path d="M.5 0L8 15" stroke={t.active ? "#00c8c8" : "#000"} fill="none" />
          </svg>
          <span
            className={clsx(
              "h-[15px] grow border-b pl-1 text-left leading-[15px] whitespace-pre",
              t.cyan ? "border-[#00e8e8]" : "border-[#00f000]",
              t.bold && "text-xs leading-[15px] font-bold",
              t.active && "bg-[#f8fdf8]",
            )}
          >
            {t.label}
          </span>
          <svg viewBox="0 0 6 15" className="h-[15px] w-1.5 shrink-0" aria-hidden="true">
            {t.active && <path d="M0 0h6L0 15z" fill="#f8fdf8" />}
            <path
              d={t.active ? "M0 15L5.500 0" : "M0 15L4 7"}
              stroke={t.active ? "#00c8c8" : "#000"}
              fill="none"
            />
          </svg>
        </button>
      ))}
      <button className={clsx("ml-auto w-[15px] bg-[#c0c0c0] leading-3 text-[#808080]", raised)} aria-label="More tabs">
        »
      </button>
    </div>
  );
}

const statusCells = [
  { text: "", width: "w-[39px]" },
  { text: "H: 4/0/2", width: "w-12" },
  { text: "Slots: 0/40", width: "w-[75px]" },
  { text: "D: 188.02 MB", width: "w-[89px]" },
  { text: "U: 7.26 GB", width: "w-[95px]" },
  { text: "D: 1.08 kB/s (1)", width: "w-[114px]" },
  { text: "U: 239.56 kB/s (43)", width: "w-[130px]" },
];

const grip = "w-[3px] border-l border-r border-l-white border-r-[#808080]";

function DcWindow() {
  return (
    <section className="flex flex-col">
      <header className="flex h-[18px] items-center gap-0.5 bg-linear-to-r from-[#000080] via-[#6868a0] to-[#b8bcb8] px-0.5">
        <DcLogo />
        <h1 className="grow text-[13px] leading-4 font-bold whitespace-pre text-white">
          DC++ 0.401 - [[RO][CT][RDS]Pityc (Parazitii  Hub)]
        </h1>
        <Caption />
      </header>
      <div className="flex h-[25px] items-center gap-1 border-b border-[#808080] px-[3px]">
        <div className={clsx("h-[18px]", grip)} />
        <Ico>
          <path d="M5 6q-1-6 3-6t3 6v4H5z" fill="#402010" />
          <path d="M6 2h4v5l-2 2-2-2z" fill="#c07840" />
          <path d="M2 16q-1-6 6-7 7 1 6 7z" fill="#3848a8" />
          <path d="M7 9h2l-1 6z" fill="#d89060" />
        </Ico>
        <Menu items={["File", "View", "Window", "Help"]} className="grow gap-[15px] pl-0.5" />
        <Caption />
      </div>
      <div className="flex h-8 items-center border-t border-white px-[3px]">
        <div className={clsx("mr-1 h-[26px]", grip)} />
        {hubToolbar.map((group) => (
          <div
            key={group[0].label}
            className="mr-1 flex border-r border-white pr-[3px] last:border-r-0"
          >
            {group.map((t) => (
              <button key={t.label} aria-label={t.label} className="flex h-[22px] w-[27px] items-center justify-center">
                {t.icon}
              </button>
            ))}
          </div>
        ))}
      </div>
      <div className={clsx("flex h-[116px]", well)}>
        <ol className="grow px-px pt-px font-['Liberation_Sans',sans-serif] leading-[13px]">
          {chat.map(([nick, text], i) => (
            <li key={i}>
              {`<${nick}> `}
              {text}
            </li>
          ))}
        </ol>
        <VScroll before="h-11" thumb="h-9" />
      </div>
      <div className="px-0.5 pt-1">
        <input aria-label="Message" className={clsx("block h-[21px] w-full px-1 outline-none", well)} />
      </div>
      <div className={clsx("mt-[5px] mr-[17px] h-[18px] leading-4", sunken)}>[02:07] Last change: 02:07:44</div>
      <div className="mt-[5px] border-t border-l-2 border-black pr-0.5">
        <div className="flex h-[672px]">
          <div className="min-w-0 grow overflow-hidden bg-[#f8fdf8]">
            <TransferTable />
          </div>
          <VScroll before="" thumb="h-[518px]" />
        </div>
        <div className="flex h-4 pr-4">
          <div className={clsx("flex grow", dither)}>
            <Arrow dir="left" />
            <div className={clsx("w-[85%] bg-[#c0c0c0]", raised)} />
            <Arrow dir="right" className="ml-auto" />
          </div>
        </div>
      </div>
      <div className="mt-px">
        <HubTabs />
      </div>
      <footer className="mt-[3px] flex h-[18px] gap-px pr-[17px] leading-4">
        <div className={clsx("grow", sunken)}>[01:34] File list refresh finished</div>
        {statusCells.map((c) => (
          <div key={c.text} className={clsx("whitespace-pre", c.width, sunken)}>
            {c.text}
          </div>
        ))}
      </footer>
    </section>
  );
}

function Taskbar() {
  return (
    <div className="flex grow items-start border-t border-white px-0.5 pt-0.5">
      <button className={clsx("flex h-[22px] w-[55px] items-center gap-0.5 px-0.5 text-xs font-bold", raised)}>
        <WinFlag />
        Start
      </button>
      <div className={clsx("ml-1.5 h-[46px]", grip)} />
      <div className="ml-2 grid grid-cols-4 gap-x-[7px] gap-y-1.5 pt-[3px]">
        {quickLaunch.map((q) => (
          <button key={q.label} aria-label={q.label}>
            {q.icon}
          </button>
        ))}
      </div>
      <div className={clsx("ml-2.5 h-[46px]", grip)} />
      <button
        className={clsx(
          "ml-2 flex h-[22px] w-[159px] items-center gap-0.5 border border-t-black border-l-black border-r-white border-b-white pl-1 text-[13px] font-bold whitespace-nowrap",
          dither,
        )}
      >
        <DcLogo />
        DC++ 0.401 - [[RO][C...
      </button>
      <button className={clsx("ml-1 flex h-[22px] w-[159px] items-center gap-0.5 pl-[3px]", raised)}>
        <ImagingLogo />
        Untitled - Imaging
      </button>
      <div className={clsx("ml-auto flex h-[38px] w-[166px] justify-between pt-0.5 pr-3 pl-0.5", sunken)}>
        <div className="grid grid-cols-6 gap-x-0.5 gap-y-px">
          {trayIcons.slice(0, 6).map((t) => (
            <button key={t.label} aria-label={t.label}>
              {t.icon}
            </button>
          ))}
          <button className="size-4 bg-[#000080] text-center leading-4 text-white">EN</button>
          {trayIcons.slice(6).map((t) => (
            <button key={t.label} aria-label={t.label}>
              {t.icon}
            </button>
          ))}
        </div>
        <time className="leading-[18px]">02:07</time>
      </div>
    </div>
  );
}

export default function App() {
  return (
    <div className="min-h-screen bg-white font-[Roboto,sans-serif] text-[11px] text-black">
      <div className="grid min-h-[1024px] grid-cols-2">
        <main className="relative bg-black">
          <div className="grid w-[150px] grid-cols-2">
            {desktopIcons.map((d) => (
              <button
                key={d.label}
                className="flex h-[75px] flex-col items-center gap-[5px] pt-0.5 leading-[13px] text-white"
              >
                {d.icon}
                {d.label}
              </button>
            ))}
          </div>
          <ImagingWindow />
        </main>
        <div className="flex flex-col bg-[#c0c0c0]">
          <DcWindow />
          <Taskbar />
        </div>
      </div>
    </div>
  );
}
